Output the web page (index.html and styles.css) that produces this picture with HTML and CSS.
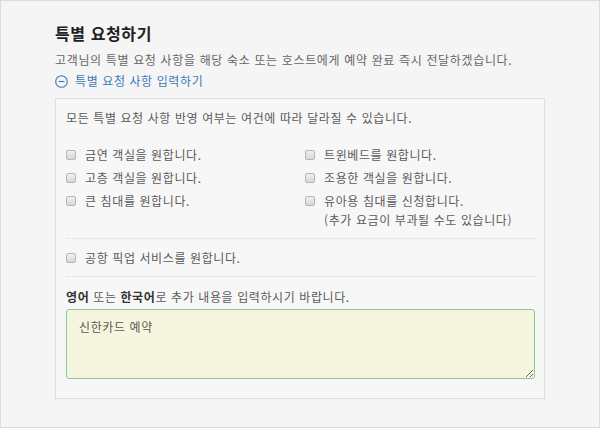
FILE: index.html
```html
<!DOCTYPE html>
<html lang="ko">
<head>
    <meta charset="UTF-8">
    <title>특별 요청하기</title>
    <link rel="stylesheet" href="styles.css">
</head>
<body>
<div class="page">
    <section class="request">
        <h2 class="request-title">특별 요청하기</h2>
        <p class="request-desc">고객님의 특별 요청 사항을 해당 숙소 또는 호스트에게 예약 완료 즉시 전달하겠습니다.</p>
        <a class="request-toggle" href="#">
            <svg class="toggle-icon" width="13" height="13" viewBox="0 0 13 13">
                <circle cx="6.5" cy="6.5" r="5.8" fill="none" stroke="#3a78b8" stroke-width="1.1"/>
                <line x1="3.6" y1="6.5" x2="9.4" y2="6.5" stroke="#3a78b8" stroke-width="1.2"/>
            </svg>
            특별 요청 사항 입력하기
        </a>

        <div class="request-box">
            <p class="box-note">모든 특별 요청 사항 반영 여부는 여건에 따라 달라질 수 있습니다.</p>

            <div class="option-grid">
                <label class="option"><input type="checkbox"><span>금연 객실을 원합니다.</span></label>
                <label class="option"><input type="checkbox"><span>트윈베드를 원합니다.</span></label>
                <label class="option"><input type="checkbox"><span>고층 객실을 원합니다.</span></label>
                <label class="option"><input type="checkbox"><span>조용한 객실을 원합니다.</span></label>
                <label class="option"><input type="checkbox"><span>큰 침대를 원합니다.</span></label>
                <label class="option"><input type="checkbox"><span>유아용 침대를 신청합니다.<br>(추가 요금이 부과될 수도 있습니다)</span></label>
            </div>

            <div class="option-single">
                <label class="option"><input type="checkbox"><span>공항 픽업 서비스를 원합니다.</span></label>
            </div>

            <p class="memo-label"><b>영어</b> 또는 <b>한국어</b>로 추가 내용을 입력하시기 바랍니다.</p>
            <textarea class="memo">신한카드 예약</textarea>
        </div>
    </section>
</div>
</body>
</html>
```

FILE: styles.css
```css
html, body {
    margin: 0;
    padding: 0;
}
body {
    background-color: #f5f5f5;
    font-family: "Noto Sans CJK KR", "Noto Sans", sans-serif;
    color: #5a5a5a;
}
.page {
    box-sizing: border-box;
    width: 600px;
    height: 428px;
    border: 1px solid #dcdcdc;
    padding: 22px 0 0 54px;
}
.request-title {
    margin: 0;
    font-size: 16px;
    line-height: 20px;
    font-weight: bold;
    letter-spacing: 0.6px;
    color: #222;
}
.request-desc {
    margin: 7px 0 0;
    font-size: 12px;
    line-height: 20px;
    letter-spacing: 0.65px;
    color: #666;
}
.request-toggle {
    display: flex;
    align-items: center;
    gap: 7px;
    margin-top: 1px;
    font-size: 12px;
    line-height: 20px;
    letter-spacing: 0.6px;
    color: #3a78b8;
    text-decoration: none;
}
.toggle-icon {
    display: block;
}
.request-box {
    box-sizing: border-box;
    width: 490px;
    margin-top: 7px;
    border: 1px solid #dedede;
    background-color: #f7f7f7;
    padding: 9px 9px 19px 10px;
}
.box-note {
    margin: 0;
    font-size: 12px;
    line-height: 20px;
    letter-spacing: 0.6px;
}
.option-grid {
    display: grid;
    grid-template-columns: 239px 1fr;
    row-gap: 4px;
    margin-top: 17px;
    padding-bottom: 9px;
    border-bottom: 1px dotted #d8d8d8;
}
.option-single {
    padding: 9px 0 9px;
    border-bottom: 1px dotted #d8d8d8;
}
.option {
    display: flex;
    align-items: flex-start;
    gap: 9px;
    font-size: 12px;
    line-height: 19px;
    letter-spacing: 0.6px;
}
.option input {
    appearance: none;
    -webkit-appearance: none;
    box-sizing: border-box;
    flex: none;
    width: 10px;
    height: 10px;
    margin: 5px 0 0;
    border: 1px solid #b5b5b5;
    border-radius: 2px;
    background: linear-gradient(#f0f0f0, #d6d6d6);
}
.memo-label {
    margin: 10px 0 0;
    font-size: 12px;
    line-height: 20px;
    letter-spacing: 0.6px;
}
.memo-label b {
    color: #333;
}
.memo {
    display: block;
    box-sizing: border-box;
    width: 469px;
    height: 70px;
    margin-top: 2px;
    padding: 8px 12px;
    border: 1px solid #86c99c;
    border-radius: 3px;
    background-color: #f6f6df;
    font-family: "Noto Sans CJK KR", "Noto Sans", sans-serif;
    font-size: 12px;
    line-height: 18px;
    letter-spacing: 0.6px;
    color: #5a5a5a;
    outline: none;
}
```
